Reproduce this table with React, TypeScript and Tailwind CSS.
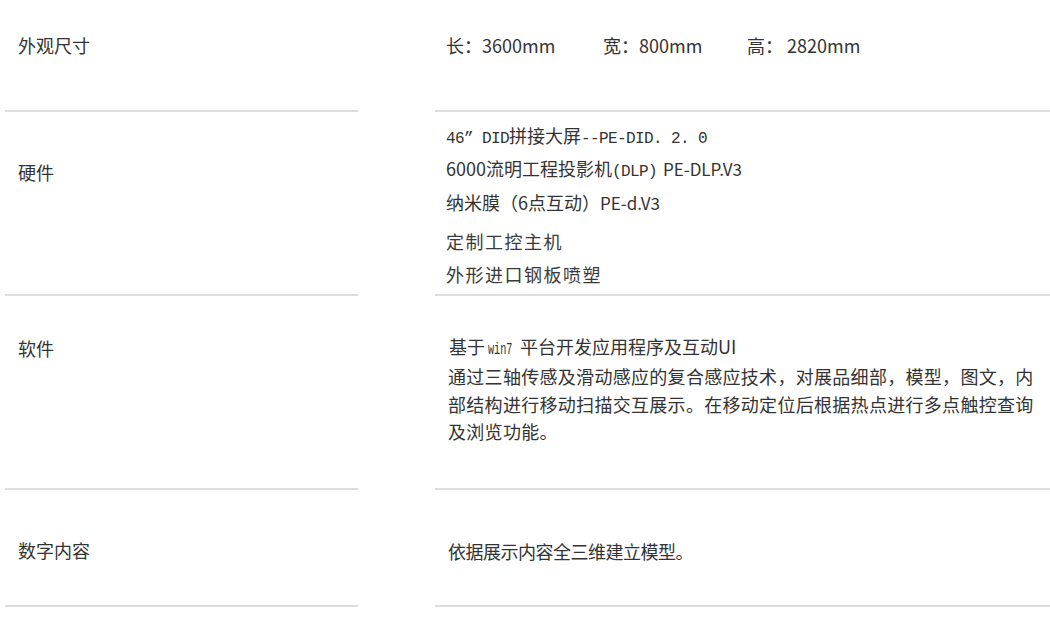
import type { ReactNode } from 'react';

// Spec sheet: label column on the left, details on the right, each row closed by a grey rule.

const MONO = "font-['Liberation_Mono','Noto_Sans_CJK_SC',monospace] text-[16px] leading-none tracking-[-0.6px]";

function SpecRow({
  label,
  rowClass,
  labelClass,
  bodyClass,
  children,
}: {
  label: string;
  rowClass: string;
  labelClass: string;
  bodyClass: string;
  children: ReactNode;
}) {
  return (
    <div className="flex">
      <div className={`ml-[5px] w-[353px] shrink-0 border-b-2 border-[#dcdcdc] pl-[13px] leading-[24px] ${rowClass} ${labelClass}`}>
        {label}
      </div>
      <div className={`ml-[77px] w-[615px] shrink-0 border-b-2 border-[#dcdcdc] pl-[11px] ${rowClass} ${bodyClass}`}>
        {children}
      </div>
    </div>
  );
}

export default function App() {
  return (
    <div className="min-h-[623px] w-[1050px] bg-white text-[18px] text-[#333] font-['Noto_Sans_CJK_SC','Noto_Sans',sans-serif]">
      <SpecRow label="外观尺寸" rowClass="h-[112px]" labelClass="pt-[33px]" bodyClass="pt-[33px]">
        <div className="flex leading-[24px]">
          <span className="w-[157px]">长：3600mm</span>
          <span className="w-[144px]">宽：800mm</span>
          <span>高：<span className="ml-[4px]">2820mm</span></span>
        </div>
      </SpecRow>

      <SpecRow label="硬件" rowClass="h-[184px]" labelClass="pt-[48px]" bodyClass="pt-[6px]">
        <div className="h-[34px] leading-[34px]">
          <span className={MONO}>46” DID</span>
          拼接大屏
          <span className={MONO}>--PE-DID. 2. 0</span>
        </div>
        <div className="h-[33px] leading-[33px]">
          6000流明工程投影机<span className={MONO}>(DLP)</span>
          <span className="ml-[6px] text-[17px] leading-none">PE-DLP.V3</span>
        </div>
        <div className="h-[34px] leading-[34px]">
          纳米膜（6点互动）<span className="text-[17px] leading-none">PE-d.V3</span>
        </div>
        <div className="mt-[6px] h-[33px] leading-[33px] tracking-[1.5px] text-[#3a3a3a]">定制工控主机</div>
        <div className="h-[33px] leading-[33px] tracking-[1.5px] text-[#3a3a3a]">外形进口钢板喷塑</div>
      </SpecRow>

      <SpecRow label="软件" rowClass="h-[194px]" labelClass="pt-[40px]" bodyClass="pt-[36px] pr-[4px]">
        <div className="h-[28px] pl-[3px] leading-[28px]">
          基于
          <span className="mx-[3px] inline-block w-[25px] origin-left scale-x-60 font-['Liberation_Mono',monospace] text-[17px] leading-none">
            win7
          </span>
          {' '}平台开发应用程序及互动UI
        </div>
        <p className="mt-[3px] pl-[2px] leading-[27.5px] tracking-[0.3px]">
          通过三轴传感及滑动感应的复合感应技术，对展品细部，模型，图文，内部结构进行移动扫描交互展示。在移动定位后根据热点进行多点触控查询及浏览功能。
        </p>
      </SpecRow>

      <SpecRow label="数字内容" rowClass="h-[117px]" labelClass="pt-[48px]" bodyClass="pt-[49px]">
        <div className="pl-[2px] leading-[24px] tracking-[-0.5px]">依据展示内容全三维建立模型。</div>
      </SpecRow>
    </div>
  );
}
